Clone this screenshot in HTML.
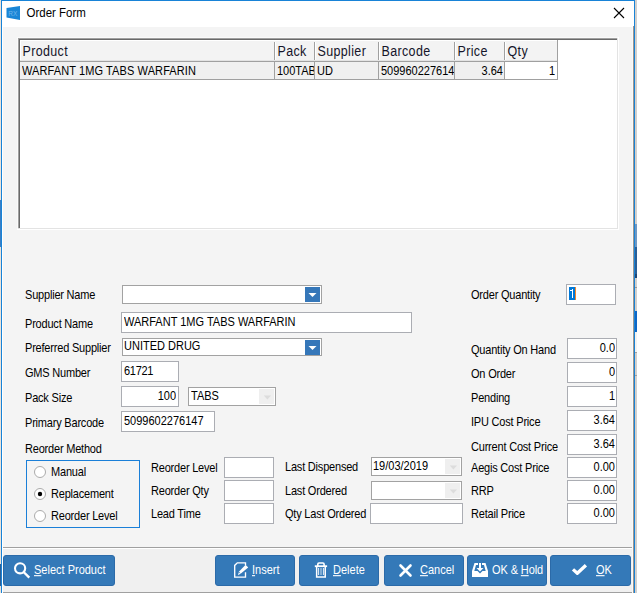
<!DOCTYPE html>
<html><head><meta charset="utf-8">
<style>
*{margin:0;padding:0;box-sizing:border-box}
html,body{width:637px;height:593px;overflow:hidden;background:#f3f3f3}
body{position:relative;font-family:"Liberation Sans",sans-serif;color:#000}
.a{position:absolute}
</style></head><body>
<div class="a" style="left:0;top:0;width:1px;height:593px;background:#ebe2d9"></div>
<div class="a" style="left:635px;top:0;width:1px;height:593px;background:#d6d0ca"></div>
<div class="a" style="left:636px;top:0;width:1px;height:593px;background:#d0d0d0"></div>
<div class="a" style="left:635px;top:224px;width:2px;height:23px;background:#6f98c3"></div>
<div class="a" style="left:635px;top:247px;width:2px;height:27px;background:#2b5f96"></div>
<div class="a" style="left:635px;top:274px;width:2px;height:4px;background:#1f4775"></div>
<div class="a" style="left:635px;top:287px;width:2px;height:1px;background:#9a9a9a"></div>
<div class="a" style="left:635px;top:311px;width:2px;height:21px;background:#0f67c6"></div>
<div class="a" style="left:635px;top:332px;width:2px;height:20px;background:#f2f2f2"></div>
<div class="a" style="left:635px;top:352px;width:2px;height:1px;background:#a0a0a0"></div>
<div class="a" style="left:635px;top:375px;width:2px;height:1px;background:#a0a0a0"></div>
<div class="a" style="left:0px;top:200px;width:1px;height:47px;background:#3b7fc4"></div>
<div class="a" style="left:0px;top:564px;width:1px;height:22px;background:#2b5f96"></div>
<div class="a" style="left:1px;top:0px;width:634px;height:1px;background:#1883d7"></div>
<div class="a" style="left:1px;top:0px;width:1px;height:593px;background:#1883d7"></div>
<div class="a" style="left:634px;top:0px;width:1px;height:593px;background:#1883d7"></div>
<div class="a" style="left:2px;top:1px;width:632px;height:26px;background:#fff"></div>
<div class="a" style="left:2px;top:27px;width:1px;height:566px;background:#fff"></div>
<div class="a" style="left:3px;top:27px;width:629px;height:520px;background:#f4f4f4"></div>
<div class="a" style="left:3px;top:547px;width:629px;height:1px;background:#a0a0a0"></div>
<div class="a" style="left:3px;top:548px;width:629px;height:1px;background:#fff"></div>
<div class="a" style="left:3px;top:549px;width:629px;height:43px;background:#f0f0f0"></div>
<div class="a" style="left:3px;top:592px;width:629px;height:1px;background:#a0a0a0"></div>
<div class="a" style="left:632px;top:27px;width:1px;height:566px;background:#fafafa"></div>
<div class="a" style="left:633px;top:26px;width:1px;height:567px;background:#9d9690"></div>
<svg class="a" style="left:6px;top:6px" width="15" height="15" viewBox="0 0 15 15"><path d="M0.5 2 L14 0 L14 14 L0.5 11.5 Z" fill="#1a86d6"/><text x="2.3" y="9.8" font-family="Liberation Sans" font-size="6.5" fill="#6fb5ea">RX</text></svg>
<div class="a" style="left:26.5px;top:6.02px;font-size:11.5px;line-height:14px;letter-spacing:0px;color:#000;white-space:nowrap;transform:scaleY(1.08);transform-origin:0 10.98px;">Order Form</div>
<svg class="a" style="left:613px;top:7px" width="12" height="12" viewBox="0 0 12 12"><path d="M1 1 L11 11 M11 1 L1 11" stroke="#000" stroke-width="1.1"/></svg>
<div class="a" style="left:17px;top:37px;width:602px;height:1px;background:#fafafa"></div>
<div class="a" style="left:17px;top:37px;width:1px;height:193px;background:#fafafa"></div>
<div class="a" style="left:18px;top:38px;width:600px;height:1px;background:#a0a0a0"></div>
<div class="a" style="left:18px;top:38px;width:1px;height:191px;background:#a0a0a0"></div>
<div class="a" style="left:19px;top:39px;width:598px;height:1px;background:#696969"></div>
<div class="a" style="left:19px;top:39px;width:1px;height:189px;background:#696969"></div>
<div class="a" style="left:617px;top:38px;width:1px;height:191px;background:#e3e3e3"></div>
<div class="a" style="left:18px;top:228px;width:600px;height:1px;background:#e3e3e3"></div>
<div class="a" style="left:618px;top:37px;width:1px;height:193px;background:#fff"></div>
<div class="a" style="left:17px;top:229px;width:602px;height:1px;background:#fff"></div>
<div class="a" style="left:20px;top:40px;width:597px;height:188px;background:#fff"></div>
<div class="a" style="left:20px;top:40px;width:538px;height:21px;background:#fff"></div>
<div class="a" style="left:21px;top:41px;width:537px;height:19px;background:#f3f3f3"></div>
<div class="a" style="left:20px;top:60px;width:538px;height:1px;background:#e3e3e3"></div>
<div class="a" style="left:20px;top:61px;width:538px;height:1px;background:#a0a0a0"></div>
<div class="a" style="left:20px;top:62px;width:537px;height:17px;background:#f0f0f0"></div>
<div class="a" style="left:20px;top:79px;width:538px;height:1px;background:#a0a0a0"></div>
<div class="a" style="left:505px;top:62px;width:52px;height:17px;background:#fff"></div>
<div class="a" style="left:274px;top:42px;width:1px;height:18px;background:#a0a0a0"></div>
<div class="a" style="left:275px;top:42px;width:1px;height:18px;background:#fff"></div>
<div class="a" style="left:274px;top:62px;width:1px;height:18px;background:#a0a0a0"></div>
<div class="a" style="left:314px;top:42px;width:1px;height:18px;background:#a0a0a0"></div>
<div class="a" style="left:315px;top:42px;width:1px;height:18px;background:#fff"></div>
<div class="a" style="left:314px;top:62px;width:1px;height:18px;background:#a0a0a0"></div>
<div class="a" style="left:378px;top:42px;width:1px;height:18px;background:#a0a0a0"></div>
<div class="a" style="left:379px;top:42px;width:1px;height:18px;background:#fff"></div>
<div class="a" style="left:378px;top:62px;width:1px;height:18px;background:#a0a0a0"></div>
<div class="a" style="left:454px;top:42px;width:1px;height:18px;background:#a0a0a0"></div>
<div class="a" style="left:455px;top:42px;width:1px;height:18px;background:#fff"></div>
<div class="a" style="left:454px;top:62px;width:1px;height:18px;background:#a0a0a0"></div>
<div class="a" style="left:504px;top:42px;width:1px;height:18px;background:#a0a0a0"></div>
<div class="a" style="left:505px;top:42px;width:1px;height:18px;background:#fff"></div>
<div class="a" style="left:504px;top:62px;width:1px;height:18px;background:#a0a0a0"></div>
<div class="a" style="left:557px;top:40px;width:1px;height:40px;background:#a0a0a0"></div>
<div class="a" style="left:22.5px;top:44.67px;font-size:12.5px;line-height:14px;letter-spacing:0.35px;color:#15152a;white-space:nowrap;transform:scaleY(1.1);transform-origin:0 11.33px;">Product</div>
<div class="a" style="left:277.5px;top:44.67px;font-size:12.5px;line-height:14px;letter-spacing:0.35px;color:#15152a;white-space:nowrap;transform:scaleY(1.1);transform-origin:0 11.33px;">Pack</div>
<div class="a" style="left:317.5px;top:44.67px;font-size:12.5px;line-height:14px;letter-spacing:0.35px;color:#15152a;white-space:nowrap;transform:scaleY(1.1);transform-origin:0 11.33px;">Supplier</div>
<div class="a" style="left:381.5px;top:44.67px;font-size:12.5px;line-height:14px;letter-spacing:0.35px;color:#15152a;white-space:nowrap;transform:scaleY(1.1);transform-origin:0 11.33px;">Barcode</div>
<div class="a" style="left:457.5px;top:44.67px;font-size:12.5px;line-height:14px;letter-spacing:0.35px;color:#15152a;white-space:nowrap;transform:scaleY(1.1);transform-origin:0 11.33px;">Price</div>
<div class="a" style="left:507.5px;top:44.67px;font-size:12.5px;line-height:14px;letter-spacing:0.35px;color:#15152a;white-space:nowrap;transform:scaleY(1.1);transform-origin:0 11.33px;">Qty</div>
<div class="a" style="left:22px;top:64.19px;width:252px;overflow:hidden;font-size:11px;line-height:14px;letter-spacing:0.1px;white-space:nowrap;transform:scaleY(1.1);transform-origin:0 10.81px;">WARFANT 1MG TABS WARFARIN</div>
<div class="a" style="left:277px;top:64.19px;width:37px;overflow:hidden;font-size:11px;line-height:14px;letter-spacing:0px;white-space:nowrap;transform:scaleY(1.1);transform-origin:0 10.81px;">100TABS</div>
<div class="a" style="left:317px;top:64.19px;width:61px;overflow:hidden;font-size:11px;line-height:14px;letter-spacing:0px;white-space:nowrap;transform:scaleY(1.1);transform-origin:0 10.81px;">UD</div>
<div class="a" style="left:381px;top:64.19px;width:73px;overflow:hidden;font-size:11px;line-height:14px;letter-spacing:0px;white-space:nowrap;transform:scaleY(1.1);transform-origin:0 10.81px;">5099602276147</div>
<div class="a" style="right:134px;top:64.19px;font-size:11px;line-height:14px;letter-spacing:0px;color:#000;white-space:nowrap;text-align:right;transform:scaleY(1.1);transform-origin:0 10.81px;">3.64</div>
<div class="a" style="right:82px;top:64.19px;font-size:11px;line-height:14px;letter-spacing:0px;color:#000;white-space:nowrap;text-align:right;transform:scaleY(1.1);transform-origin:0 10.81px;">1</div>
<div class="a" style="left:25px;top:288.19px;font-size:11px;line-height:14px;letter-spacing:-0.2px;color:#000;white-space:nowrap;transform:scaleY(1.1);transform-origin:0 10.81px;">Supplier Name</div>
<div class="a" style="left:25px;top:317.19px;font-size:11px;line-height:14px;letter-spacing:-0.2px;color:#000;white-space:nowrap;transform:scaleY(1.1);transform-origin:0 10.81px;">Product Name</div>
<div class="a" style="left:25px;top:341.19px;font-size:11px;line-height:14px;letter-spacing:-0.2px;color:#000;white-space:nowrap;transform:scaleY(1.1);transform-origin:0 10.81px;">Preferred Supplier</div>
<div class="a" style="left:25px;top:366.19px;font-size:11px;line-height:14px;letter-spacing:-0.2px;color:#000;white-space:nowrap;transform:scaleY(1.1);transform-origin:0 10.81px;">GMS Number</div>
<div class="a" style="left:25px;top:391.19px;font-size:11px;line-height:14px;letter-spacing:-0.2px;color:#000;white-space:nowrap;transform:scaleY(1.1);transform-origin:0 10.81px;">Pack Size</div>
<div class="a" style="left:25px;top:416.19px;font-size:11px;line-height:14px;letter-spacing:-0.2px;color:#000;white-space:nowrap;transform:scaleY(1.1);transform-origin:0 10.81px;">Primary Barcode</div>
<div class="a" style="left:25px;top:442.19px;font-size:11px;line-height:14px;letter-spacing:-0.2px;color:#000;white-space:nowrap;transform:scaleY(1.1);transform-origin:0 10.81px;">Reorder Method</div>
<div class="a" style="left:122px;top:285px;width:200px;height:19px;background:#fff;border:1px solid #a2a2a2"></div>
<div class="a" style="left:305px;top:287px;width:15px;height:15px;background:#3577b9"></div>
<svg class="a" style="left:305px;top:287px" width="15" height="15"><path d="M3.5 6 L11.5 6 L7.5 10 Z" fill="#fff"/></svg>
<div class="a" style="left:121px;top:312px;width:291px;height:21px;background:#fff;border:1px solid #abadb3"></div>
<div class="a" style="left:124px;top:315.19px;font-size:11px;line-height:14px;letter-spacing:0px;color:#000;white-space:nowrap;transform:scaleY(1.1);transform-origin:0 10.81px;">WARFANT 1MG TABS WARFARIN</div>
<div class="a" style="left:122px;top:338px;width:200px;height:18px;background:#fff;border:1px solid #a2a2a2"></div>
<div class="a" style="left:305px;top:340px;width:15px;height:15px;background:#3577b9"></div>
<svg class="a" style="left:305px;top:340px" width="15" height="15"><path d="M3.5 6 L11.5 6 L7.5 10 Z" fill="#fff"/></svg>
<div class="a" style="left:124px;top:339.19px;font-size:11px;line-height:14px;letter-spacing:0px;color:#000;white-space:nowrap;transform:scaleY(1.1);transform-origin:0 10.81px;">UNITED DRUG</div>
<div class="a" style="left:121px;top:361px;width:58px;height:21px;background:#fff;border:1px solid #abadb3"></div>
<div class="a" style="left:124px;top:364.19px;font-size:11px;line-height:14px;letter-spacing:-0.3px;color:#000;white-space:nowrap;transform:scaleY(1.1);transform-origin:0 10.81px;">61721</div>
<div class="a" style="left:121px;top:386px;width:58px;height:21px;background:#fff;border:1px solid #abadb3"></div>
<div class="a" style="right:461px;top:389.19px;font-size:11px;line-height:14px;letter-spacing:0px;color:#000;white-space:nowrap;text-align:right;transform:scaleY(1.1);transform-origin:0 10.81px;">100</div>
<div class="a" style="left:188px;top:387px;width:88px;height:19px;background:#fff;border:1px solid #a2a2a2"></div>
<div class="a" style="left:259px;top:389px;width:15px;height:15px;background:#efefef"></div>
<svg class="a" style="left:259px;top:389px" width="15" height="15"><path d="M4.8 6.6 L12 6.6 L8.4 10.6 Z" fill="#dcdcdc"/></svg>
<div class="a" style="left:191px;top:389.19px;font-size:11px;line-height:14px;letter-spacing:0px;color:#000;white-space:nowrap;transform:scaleY(1.1);transform-origin:0 10.81px;">TABS</div>
<div class="a" style="left:121px;top:411px;width:94px;height:21px;background:#fff;border:1px solid #abadb3"></div>
<div class="a" style="left:124px;top:414.19px;font-size:11px;line-height:14px;letter-spacing:0px;color:#000;white-space:nowrap;transform:scaleY(1.1);transform-origin:0 10.81px;">5099602276147</div>
<div class="a" style="left:26px;top:460px;width:114px;height:68px;background:transparent;border:1px solid #1a7fd8"></div>
<svg class="a" style="left:33px;top:465px" width="14" height="14"><circle cx="7" cy="7" r="5.5" fill="#fff" stroke="#a6a6a6" stroke-width="0.95"/></svg>
<div class="a" style="left:51px;top:465.19px;font-size:11px;line-height:14px;letter-spacing:-0.2px;color:#000;white-space:nowrap;transform:scaleY(1.1);transform-origin:0 10.81px;">Manual</div>
<svg class="a" style="left:33px;top:487px" width="14" height="14"><circle cx="7" cy="7" r="5.5" fill="#fff" stroke="#a6a6a6" stroke-width="0.95"/><circle cx="7" cy="7" r="2.2" fill="#000"/></svg>
<div class="a" style="left:51px;top:487.19px;font-size:11px;line-height:14px;letter-spacing:-0.2px;color:#000;white-space:nowrap;transform:scaleY(1.1);transform-origin:0 10.81px;">Replacement</div>
<svg class="a" style="left:33px;top:509px" width="14" height="14"><circle cx="7" cy="7" r="5.5" fill="#fff" stroke="#a6a6a6" stroke-width="0.95"/></svg>
<div class="a" style="left:51px;top:509.19px;font-size:11px;line-height:14px;letter-spacing:-0.2px;color:#000;white-space:nowrap;transform:scaleY(1.1);transform-origin:0 10.81px;">Reorder Level</div>
<div class="a" style="left:151px;top:461.19px;font-size:11px;line-height:14px;letter-spacing:-0.2px;color:#000;white-space:nowrap;transform:scaleY(1.1);transform-origin:0 10.81px;">Reorder Level</div>
<div class="a" style="left:151px;top:484.19px;font-size:11px;line-height:14px;letter-spacing:-0.2px;color:#000;white-space:nowrap;transform:scaleY(1.1);transform-origin:0 10.81px;">Reorder Qty</div>
<div class="a" style="left:151px;top:507.19px;font-size:11px;line-height:14px;letter-spacing:-0.2px;color:#000;white-space:nowrap;transform:scaleY(1.1);transform-origin:0 10.81px;">Lead Time</div>
<div class="a" style="left:224px;top:457px;width:50px;height:21px;background:#fff;border:1px solid #abadb3"></div>
<div class="a" style="left:224px;top:480px;width:50px;height:21px;background:#fff;border:1px solid #abadb3"></div>
<div class="a" style="left:224px;top:503px;width:50px;height:21px;background:#fff;border:1px solid #abadb3"></div>
<div class="a" style="left:285px;top:460.19px;font-size:11px;line-height:14px;letter-spacing:-0.2px;color:#000;white-space:nowrap;transform:scaleY(1.1);transform-origin:0 10.81px;">Last Dispensed</div>
<div class="a" style="left:285px;top:484.19px;font-size:11px;line-height:14px;letter-spacing:-0.2px;color:#000;white-space:nowrap;transform:scaleY(1.1);transform-origin:0 10.81px;">Last Ordered</div>
<div class="a" style="left:285px;top:507.19px;font-size:11px;line-height:14px;letter-spacing:-0.2px;color:#000;white-space:nowrap;transform:scaleY(1.1);transform-origin:0 10.81px;">Qty Last Ordered</div>
<div class="a" style="left:371px;top:457px;width:91px;height:19px;background:#fff;border:1px solid #a2a2a2"></div>
<div class="a" style="left:445px;top:459px;width:15px;height:15px;background:#efefef"></div>
<svg class="a" style="left:445px;top:459px" width="15" height="15"><path d="M4.8 6.6 L12 6.6 L8.4 10.6 Z" fill="#dcdcdc"/></svg>
<div class="a" style="left:373px;top:459.19px;font-size:11px;line-height:14px;letter-spacing:0px;color:#000;white-space:nowrap;transform:scaleY(1.1);transform-origin:0 10.81px;">19/03/2019</div>
<div class="a" style="left:371px;top:481px;width:91px;height:19px;background:#fff;border:1px solid #a2a2a2"></div>
<div class="a" style="left:445px;top:483px;width:15px;height:15px;background:#efefef"></div>
<svg class="a" style="left:445px;top:483px" width="15" height="15"><path d="M4.8 6.6 L12 6.6 L8.4 10.6 Z" fill="#dcdcdc"/></svg>
<div class="a" style="left:370px;top:503px;width:93px;height:21px;background:#fff;border:1px solid #abadb3"></div>
<div class="a" style="left:471px;top:288.19px;font-size:11px;line-height:14px;letter-spacing:-0.2px;color:#000;white-space:nowrap;transform:scaleY(1.1);transform-origin:0 10.81px;">Order Quantity</div>
<div class="a" style="left:566px;top:284px;width:50px;height:21px;background:#fff;border:1px solid #abadb3"></div>
<div class="a" style="left:569px;top:287px;width:6px;height:13px;background:#0078d7"></div>
<div class="a" style="left:575px;top:287px;width:1px;height:13px;background:#f5862a"></div>
<div class="a" style="left:572px;top:289px;width:1px;height:9px;background:#fff"></div>
<div class="a" style="left:570px;top:290px;width:2px;height:1px;background:#fff"></div>
<div class="a" style="left:471px;top:343.19px;font-size:11px;line-height:14px;letter-spacing:-0.2px;color:#000;white-space:nowrap;transform:scaleY(1.1);transform-origin:0 10.81px;">Quantity On Hand</div>
<div class="a" style="left:567px;top:338px;width:50px;height:21px;background:#fff;border:1px solid #abadb3"></div>
<div class="a" style="right:22px;top:341.19px;font-size:11px;line-height:14px;letter-spacing:0px;color:#000;white-space:nowrap;text-align:right;transform:scaleY(1.1);transform-origin:0 10.81px;">0.0</div>
<div class="a" style="left:471px;top:367.19px;font-size:11px;line-height:14px;letter-spacing:-0.2px;color:#000;white-space:nowrap;transform:scaleY(1.1);transform-origin:0 10.81px;">On Order</div>
<div class="a" style="left:567px;top:362px;width:50px;height:21px;background:#fff;border:1px solid #abadb3"></div>
<div class="a" style="right:22px;top:365.19px;font-size:11px;line-height:14px;letter-spacing:0px;color:#000;white-space:nowrap;text-align:right;transform:scaleY(1.1);transform-origin:0 10.81px;">0</div>
<div class="a" style="left:471px;top:391.19px;font-size:11px;line-height:14px;letter-spacing:-0.2px;color:#000;white-space:nowrap;transform:scaleY(1.1);transform-origin:0 10.81px;">Pending</div>
<div class="a" style="left:567px;top:386px;width:50px;height:21px;background:#fff;border:1px solid #abadb3"></div>
<div class="a" style="right:22px;top:389.19px;font-size:11px;line-height:14px;letter-spacing:0px;color:#000;white-space:nowrap;text-align:right;transform:scaleY(1.1);transform-origin:0 10.81px;">1</div>
<div class="a" style="left:471px;top:415.19px;font-size:11px;line-height:14px;letter-spacing:-0.2px;color:#000;white-space:nowrap;transform:scaleY(1.1);transform-origin:0 10.81px;">IPU Cost Price</div>
<div class="a" style="left:567px;top:410px;width:50px;height:21px;background:#fff;border:1px solid #abadb3"></div>
<div class="a" style="right:22px;top:413.19px;font-size:11px;line-height:14px;letter-spacing:0px;color:#000;white-space:nowrap;text-align:right;transform:scaleY(1.1);transform-origin:0 10.81px;">3.64</div>
<div class="a" style="left:471px;top:440.19px;font-size:11px;line-height:14px;letter-spacing:-0.2px;color:#000;white-space:nowrap;transform:scaleY(1.1);transform-origin:0 10.81px;">Current Cost Price</div>
<div class="a" style="left:567px;top:434px;width:50px;height:21px;background:#fff;border:1px solid #abadb3"></div>
<div class="a" style="right:22px;top:437.19px;font-size:11px;line-height:14px;letter-spacing:0px;color:#000;white-space:nowrap;text-align:right;transform:scaleY(1.1);transform-origin:0 10.81px;">3.64</div>
<div class="a" style="left:471px;top:461.19px;font-size:11px;line-height:14px;letter-spacing:-0.2px;color:#000;white-space:nowrap;transform:scaleY(1.1);transform-origin:0 10.81px;">Aegis Cost Price</div>
<div class="a" style="left:567px;top:457px;width:50px;height:21px;background:#fff;border:1px solid #abadb3"></div>
<div class="a" style="right:22px;top:460.19px;font-size:11px;line-height:14px;letter-spacing:0px;color:#000;white-space:nowrap;text-align:right;transform:scaleY(1.1);transform-origin:0 10.81px;">0.00</div>
<div class="a" style="left:471px;top:484.19px;font-size:11px;line-height:14px;letter-spacing:-0.2px;color:#000;white-space:nowrap;transform:scaleY(1.1);transform-origin:0 10.81px;">RRP</div>
<div class="a" style="left:567px;top:480px;width:50px;height:21px;background:#fff;border:1px solid #abadb3"></div>
<div class="a" style="right:22px;top:483.19px;font-size:11px;line-height:14px;letter-spacing:0px;color:#000;white-space:nowrap;text-align:right;transform:scaleY(1.1);transform-origin:0 10.81px;">0.00</div>
<div class="a" style="left:471px;top:507.19px;font-size:11px;line-height:14px;letter-spacing:-0.2px;color:#000;white-space:nowrap;transform:scaleY(1.1);transform-origin:0 10.81px;">Retail Price</div>
<div class="a" style="left:567px;top:503px;width:50px;height:21px;background:#fff;border:1px solid #abadb3"></div>
<div class="a" style="right:22px;top:506.19px;font-size:11px;line-height:14px;letter-spacing:0px;color:#000;white-space:nowrap;text-align:right;transform:scaleY(1.1);transform-origin:0 10.81px;">0.00</div>
<div class="a" style="left:3px;top:555px;width:112px;height:31px;background:#3479b8;border:1px solid #2b6aa8;border-radius:3px"></div>
<svg class="a" style="left:12px;top:560px" width="20" height="20"><circle cx="8.1" cy="8.3" r="5.1" fill="none" stroke="#fff" stroke-width="2.1"/><path d="M11.6 12 L17.3 17.6" stroke="#fff" stroke-width="2.4"/></svg>
<div class="a" style="left:34px;top:563.19px;font-size:11px;line-height:14px;letter-spacing:0px;color:#fff;white-space:nowrap;transform:scaleY(1.1);transform-origin:0 10.81px;"><span style="text-decoration:underline;text-underline-offset:1px">S</span>elect Product</div>
<div class="a" style="left:215px;top:555px;width:80px;height:31px;background:#3479b8;border:1px solid #2b6aa8;border-radius:3px"></div>
<svg class="a" style="left:228px;top:558px" width="28" height="24"><path d="M17.5 6.9 L17.5 4.8 L9.3 4.8 L6.7 7.4 L6.7 19.1 L17.5 19.1 L17.5 14.2" fill="none" stroke="#fff" stroke-width="1.35"/><path d="M17.6 6.8 L20.2 9.4 L12.9 15.5 L9.9 17.2 L11.1 13.6 Z" fill="#fff"/><path d="M11.2 14.3 L12.3 15.4" stroke="#3479b8" stroke-width="0.9"/></svg>
<div class="a" style="left:252px;top:563.19px;font-size:11px;line-height:14px;letter-spacing:0px;color:#fff;white-space:nowrap;transform:scaleY(1.1);transform-origin:0 10.81px;"><span style="text-decoration:underline;text-underline-offset:1px">I</span>nsert</div>
<div class="a" style="left:299px;top:555px;width:80px;height:31px;background:#3479b8;border:1px solid #2b6aa8;border-radius:3px"></div>
<svg class="a" style="left:308px;top:558px" width="28" height="24"><path d="M9.8 8 L9.8 6.2 Q9.8 5 11 5 L14.9 5 Q16.1 5 16.1 6.2 L16.1 8" fill="none" stroke="#fff" stroke-width="1.6"/><rect x="6.8" y="7.3" width="12.3" height="1.8" fill="#fff"/><path d="M8.65 9 L8.65 19.05 L17.25 19.05 L17.25 9" fill="none" stroke="#fff" stroke-width="1.5"/><path d="M10.6 10 L10.6 17 M15.4 10 L15.4 17" stroke="#fff" stroke-width="0.9"/><path d="M13 10 L13 17" stroke="#fff" stroke-opacity="0.65" stroke-width="1.2"/></svg>
<div class="a" style="left:333px;top:563.19px;font-size:11px;line-height:14px;letter-spacing:0px;color:#fff;white-space:nowrap;transform:scaleY(1.1);transform-origin:0 10.81px;"><span style="text-decoration:underline;text-underline-offset:1px">D</span>elete</div>
<div class="a" style="left:384px;top:555px;width:80px;height:31px;background:#3479b8;border:1px solid #2b6aa8;border-radius:3px"></div>
<svg class="a" style="left:398px;top:563px" width="15" height="15"><path d="M2.5 2.5 L12.5 12.5 M12.5 2.5 L2.5 12.5" stroke="#fff" stroke-width="2.6" stroke-linecap="round"/></svg>
<div class="a" style="left:420px;top:563.19px;font-size:11px;line-height:14px;letter-spacing:0px;color:#fff;white-space:nowrap;transform:scaleY(1.1);transform-origin:0 10.81px;"><span style="text-decoration:underline;text-underline-offset:1px">C</span>ancel</div>
<div class="a" style="left:467px;top:555px;width:80px;height:31px;background:#3479b8;border:1px solid #2b6aa8;border-radius:3px"></div>
<svg class="a" style="left:471px;top:562px" width="18" height="16"><path d="M1 9 L3.5 1 L7 1 L7 3 L5 3 L3.3 9 Z M17 9 L14.5 1 L11 1 L11 3 L13 3 L14.7 9 Z" fill="#fff"/><path d="M1 9 L6.5 9 L9 11.5 L11.5 9 L17 9 L17 15 L1 15 Z" fill="#fff"/><path d="M8 1 L10 1 L10 6 L12.5 6 L9 9.5 L5.5 6 L8 6 Z" fill="#fff"/></svg>
<div class="a" style="left:492px;top:563.19px;font-size:11px;line-height:14px;letter-spacing:-0.1px;color:#fff;white-space:nowrap;transform:scaleY(1.1);transform-origin:0 10.81px;">OK &amp; <span style="text-decoration:underline;text-underline-offset:1px">H</span>old</div>
<div class="a" style="left:550px;top:555px;width:81px;height:31px;background:#3479b8;border:1px solid #2b6aa8;border-radius:3px"></div>
<svg class="a" style="left:570px;top:563px" width="20" height="14"><path d="M3 6.4 L7.3 10.3 L15.9 2.3" fill="none" stroke="#fff" stroke-width="3.3" stroke-linejoin="round"/></svg>
<div class="a" style="left:596px;top:563.19px;font-size:11px;line-height:14px;letter-spacing:0px;color:#fff;white-space:nowrap;transform:scaleY(1.1);transform-origin:0 10.81px;"><span style="text-decoration:underline;text-underline-offset:1px">O</span>K</div>
</body></html>
